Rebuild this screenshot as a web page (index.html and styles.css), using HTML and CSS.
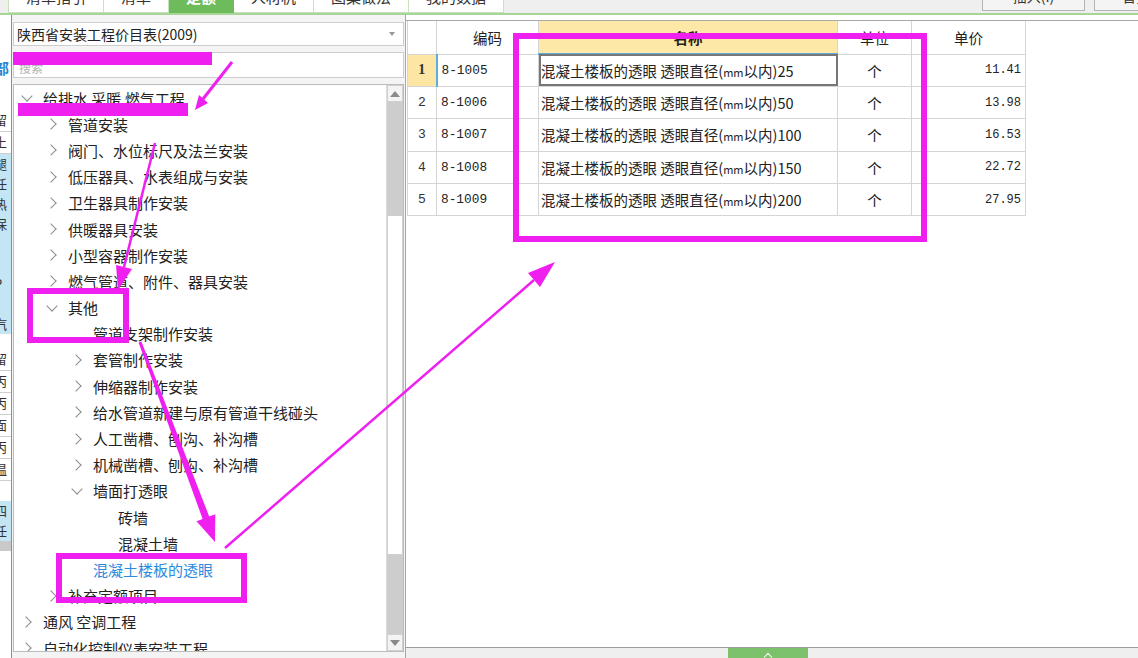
FILE: index.html
```html
<!DOCTYPE html>
<html lang="zh-CN">
<head>
    <meta charset="UTF-8">
    <title>定额</title>
    <link rel="stylesheet" href="styles.css">
</head>
<body>
    <div class="topbar">
        <div class="tabs">
            <div class="tab">清单指引</div>
            <div class="tab">清单</div>
            <div class="tab active">定额</div>
            <div class="tab">人材机</div>
            <div class="tab">图集做法</div>
            <div class="tab">我的数据</div>
        </div>
        <div class="actions">
            <button class="btn">插入(I)</button>
            <button class="btn">替换(R)</button>
        </div>
    </div>

    <div class="main">
        <div class="edge">
            <div class="edge-gap g40"></div>
            <div class="edge-cell link">部</div>
            <div class="edge-gap g29"></div>
            <div class="edge-cell line">留</div>
            <div class="edge-cell line">土</div>
            <div class="edge-block blue">
                <div class="edge-cell">腿</div>
                <div class="edge-cell">任</div>
                <div class="edge-cell">热</div>
                <div class="edge-cell">保</div>
                <div class="edge-cell"></div>
                <div class="edge-cell">(</div>
                <div class="edge-cell">P</div>
                <div class="edge-cell"></div>
                <div class="edge-cell">汽</div>
            </div>
            <div class="edge-gap g15"></div>
            <div class="edge-cell line">留</div>
            <div class="edge-cell line">丙</div>
            <div class="edge-cell line">丙</div>
            <div class="edge-cell line">面</div>
            <div class="edge-cell line">丙</div>
            <div class="edge-cell line">温</div>
            <div class="edge-gap g20"></div>
            <div class="edge-block blue">
                <div class="edge-cell">四</div>
                <div class="edge-cell">任</div>
            </div>
            <div class="edge-gap gray"></div>
        </div>

        <div class="left-panel">
            <div class="select">
                <span>陕西省安装工程价目表(2009)</span>
                <span class="caret"></span>
            </div>
            <div class="search">搜索</div>
            <div class="tree">
                <div class="tree-list">
                    <div class="node l0"><span class="tw open"></span>给排水 采暖 燃气工程</div>
                    <div class="node l1"><span class="tw"></span>管道安装</div>
                    <div class="node l1"><span class="tw"></span>阀门、水位标尺及法兰安装</div>
                    <div class="node l1"><span class="tw"></span>低压器具、水表组成与安装</div>
                    <div class="node l1"><span class="tw"></span>卫生器具制作安装</div>
                    <div class="node l1"><span class="tw"></span>供暖器具安装</div>
                    <div class="node l1"><span class="tw"></span>小型容器制作安装</div>
                    <div class="node l1"><span class="tw"></span>燃气管道、附件、器具安装</div>
                    <div class="node l1"><span class="tw open"></span>其他</div>
                    <div class="node l2"><span class="tw leaf"></span>管道支架制作安装</div>
                    <div class="node l2"><span class="tw"></span>套管制作安装</div>
                    <div class="node l2"><span class="tw"></span>伸缩器制作安装</div>
                    <div class="node l2"><span class="tw"></span>给水管道新建与原有管道干线碰头</div>
                    <div class="node l2"><span class="tw"></span>人工凿槽、刨沟、补沟槽</div>
                    <div class="node l2"><span class="tw"></span>机械凿槽、刨沟、补沟槽</div>
                    <div class="node l2"><span class="tw open"></span>墙面打透眼</div>
                    <div class="node l3"><span class="tw leaf"></span>砖墙</div>
                    <div class="node l3"><span class="tw leaf"></span>混凝土墙</div>
                    <div class="node l2 selected"><span class="tw leaf"></span>混凝土楼板的透眼</div>
                    <div class="node l1"><span class="tw"></span>补充定额项目</div>
                    <div class="node l0"><span class="tw"></span>通风 空调工程</div>
                    <div class="node l0"><span class="tw"></span>自动化控制仪表安装工程</div>
                </div>
                <div class="scroll">
                    <div class="scroll-btn"><span class="arrow up"></span></div>
                    <div class="scroll-track top"></div>
                    <div class="scroll-thumb"></div>
                    <div class="scroll-track bottom"></div>
                    <div class="scroll-btn"><span class="arrow down"></span></div>
                </div>
            </div>
        </div>

        <div class="right-panel">
            <div class="grid-wrap">
                <table class="grid">
                    <colgroup>
                        <col class="c-no"><col class="c-code"><col class="c-name"><col class="c-unit"><col class="c-price">
                    </colgroup>
                    <thead>
                        <tr><th></th><th>编码</th><th class="hl">名称</th><th>单位</th><th>单价</th></tr>
                    </thead>
                    <tbody>
                        <tr class="cur">
                            <td class="no">1</td><td class="code">8-1005</td>
                            <td class="name">混凝土楼板的透眼 透眼直径(<span class="mm">mm</span>以内)25</td>
                            <td class="unit">个</td><td class="price">11.41</td>
                        </tr>
                        <tr>
                            <td class="no">2</td><td class="code">8-1006</td>
                            <td class="name">混凝土楼板的透眼 透眼直径(<span class="mm">mm</span>以内)50</td>
                            <td class="unit">个</td><td class="price">13.98</td>
                        </tr>
                        <tr>
                            <td class="no">3</td><td class="code">8-1007</td>
                            <td class="name">混凝土楼板的透眼 透眼直径(<span class="mm">mm</span>以内)100</td>
                            <td class="unit">个</td><td class="price">16.53</td>
                        </tr>
                        <tr>
                            <td class="no">4</td><td class="code">8-1008</td>
                            <td class="name">混凝土楼板的透眼 透眼直径(<span class="mm">mm</span>以内)150</td>
                            <td class="unit">个</td><td class="price">22.72</td>
                        </tr>
                        <tr>
                            <td class="no">5</td><td class="code">8-1009</td>
                            <td class="name">混凝土楼板的透眼 透眼直径(<span class="mm">mm</span>以内)200</td>
                            <td class="unit">个</td><td class="price">27.95</td>
                        </tr>
                    </tbody>
                </table>
            </div>
            <div class="bottom-bar">
                <div class="pull"><span class="pull-arrow"></span></div>
            </div>
        </div>
    </div>

    <!-- annotation marks drawn over the screenshot -->
    <svg class="marks" width="1138" height="658" viewBox="0 0 1138 658">
        <g fill="#ef1fef" stroke="#ef1fef">
            <rect x="13" y="52" width="199" height="13" stroke="none"/>
            <rect x="18" y="103" width="170" height="13" stroke="none"/>

            <line x1="232" y1="62" x2="203" y2="99" stroke-width="3"/>
            <polygon points="195,110 208,103 199,95" stroke="none"/>

            <line x1="155" y1="143" x2="124" y2="267" stroke-width="2.5"/>
            <polygon points="118,290 132,269 116,265" stroke="none"/>

            <polygon points="138.6,342.5 141.4,341.5 209.2,516.5 215.3,514.2 215,542 196.5,521.2 202.6,518.9" stroke="none"/>

            <line x1="225" y1="548" x2="534" y2="280" stroke-width="2.5"/>
            <polygon points="555,262 540,287 528,273" stroke="none"/>

            <rect x="30" y="291" width="96" height="49" fill="none" stroke-width="6"/>
            <rect x="59" y="556" width="185" height="44" fill="none" stroke-width="6"/>
            <rect x="516" y="36" width="408" height="203" fill="none" stroke-width="6"/>
        </g>
    </svg>
</body>
</html>
```

FILE: styles.css
```css
* {
    margin: 0;
    padding: 0;
    box-sizing: border-box;
}

body {
    width: 1138px;
    height: 658px;
    overflow: hidden;
    position: relative;
    font-family: "Noto Sans CJK SC", "Noto Sans", sans-serif;
    background: #f0f0f0;
    color: #222;
}

/* top tab strip (cut off by the screenshot) */
.topbar {
    height: 15px;
    display: flex;
    justify-content: space-between;
    border-bottom: 2px solid #a6d597;
    background: #efefef;
    overflow: hidden;
}

.tabs {
    display: flex;
    margin-left: 8px;
    margin-top: -19px;
    height: 32px;
}

.tab {
    height: 32px;
    line-height: 30px;
    padding: 0 17px;
    min-width: 65px;
    text-align: center;
    font-size: 15px;
    color: #333;
    background: #fff;
    border: 1px solid #c7e2bd;
    border-left: none;
}

.tab:first-child {
    border-left: 1px solid #c7e2bd;
    min-width: 89px;
}

.tab.active {
    background: #6dbb5b;
    color: #fff;
    font-weight: bold;
    border-color: #6dbb5b;
}

.actions {
    display: flex;
    gap: 9px;
    margin-top: -19px;
    margin-right: -59px;
}

.btn {
    width: 103px;
    height: 30px;
    font-family: inherit;
    font-size: 14px;
    color: #333;
    background: #f4f4f4;
    border: 1px solid #b4b4b4;
}

.main {
    display: flex;
    height: 643px;
}

/* sliver of the window behind */
.edge {
    width: 12px;
    flex: none;
    background: #fff;
    border-right: 1px solid #8d8d8d;
    overflow: hidden;
    font-size: 13px;
}

.edge-gap.g40 { height: 40px; }
.edge-gap.g29 { height: 29px; }
.edge-gap.g15 { height: 15px; }
.edge-gap.g20 { height: 20px; }
.edge-gap.gray { height: 10px; background: #c9c9c9; }

.edge-cell {
    height: 20px;
    line-height: 20px;
    margin-left: -6px;
    white-space: nowrap;
    color: #333;
}

.edge-cell.line {
    height: 22px;
    border-bottom: 1px solid #cfcfcf;
}

.edge-cell.link {
    height: 26px;
    line-height: 26px;
    color: #2a86d1;
    font-weight: bold;
    font-size: 15px;
}

.edge-block.blue {
    background: #c4e5f4;
}

/* left: library tree */
.left-panel {
    width: 393px;
    flex: none;
    padding: 7px 1px 0 1px;
    background: #f4f4f4;
}

.select {
    height: 24px;
    display: flex;
    align-items: center;
    justify-content: space-between;
    padding: 0 8px 0 3px;
    background: #fff;
    border: 1px solid #cdcdcd;
    font-size: 14px;
    color: #222;
}

.caret {
    width: 0;
    height: 0;
    border-left: 3px solid transparent;
    border-right: 3px solid transparent;
    border-top: 4px solid #999;
}

.search {
    height: 26px;
    margin-top: 6px;
    padding: 6px 0 0 5px;
    background: #fff;
    border: 1px solid #cdcdcd;
    font-size: 12px;
    color: #b3b3b3;
}

.tree {
    height: 568px;
    margin-top: 6px;
    display: flex;
    background: #fff;
    border: 1px solid #bcbcbc;
}

.tree-list {
    flex: 1;
    overflow: hidden;
}

.node {
    height: 26.2px;
    display: flex;
    align-items: center;
    font-size: 15px;
    color: #222;
    white-space: nowrap;
}

.node.l0 { padding-left: 7px; }
.node.l1 { padding-left: 32px; }
.node.l2 { padding-left: 57px; }
.node.l3 { padding-left: 82px; }

.node.selected {
    color: #2b8ae0;
}

.tw {
    width: 12px;
    height: 12px;
    margin-right: 10px;
    flex: none;
    display: flex;
    align-items: center;
    justify-content: center;
}

.tw::before {
    content: '';
    width: 7px;
    height: 7px;
    border-right: 1.7px solid #8c8c8c;
    border-bottom: 1.7px solid #8c8c8c;
    transform: translateX(-1px) rotate(-45deg);
}

.tw.open::before {
    transform: translateY(-2px) rotate(45deg);
}

.tw.leaf::before {
    display: none;
}

.scroll {
    width: 17px;
    flex: none;
    display: flex;
    flex-direction: column;
    border-left: 1px solid #dcdcdc;
}

.scroll-btn {
    height: 17px;
    display: flex;
    align-items: center;
    justify-content: center;
    background: #f4f4f4;
    border: 1px solid #d0d0d0;
}

.arrow {
    width: 0;
    height: 0;
    border-left: 5px solid transparent;
    border-right: 5px solid transparent;
}

.arrow.up { border-bottom: 6px solid #8a8a8a; }
.arrow.down { border-top: 6px solid #8a8a8a; }

.scroll-track.top { height: 113px; background: #cdcdcd; }
.scroll-track.bottom { flex: 1; background: #cdcdcd; }

.scroll-thumb {
    height: 340px;
    background: #fff;
    border: 1px solid #cfcfcf;
}

/* right: quota grid */
.right-panel {
    flex: 1;
    display: flex;
    flex-direction: column;
    padding-top: 5px;
    background: #fff;
    border-left: 1px solid #a6a6a6;
}

.grid-wrap {
    flex: 1;
    padding-left: 1px;
    border-top: 1px solid #a8a8a8;
}

.grid {
    width: 619px;
    table-layout: fixed;
    border-collapse: collapse;
    font-size: 14.5px;
    color: #222;
}

.c-no { width: 29px; }
.c-code { width: 102px; }
.c-name { width: 299px; }
.c-unit { width: 74px; }
.c-price { width: 114px; }

.grid th,
.grid td {
    border: 1px solid #d5d5d5;
    white-space: nowrap;
    overflow: hidden;
}

.grid thead tr {
    height: 33px;
}

.grid th {
    font-weight: normal;
    border-top: none;
}

.grid th.hl {
    background: #fde8a7;
    font-weight: bold;
    border-bottom: 2px solid #5eaedd;
}

.grid tbody tr {
    height: 32.4px;
}

.grid td.no {
    text-align: center;
    font-family: "Liberation Mono", monospace;
    font-size: 13px;
    color: #333;
}

.grid td.code {
    padding-left: 4px;
    font-family: "Liberation Mono", monospace;
    font-size: 12.8px;
}

.grid td.name {
    padding-left: 2px;
}

.mm {
    font-size: 11px;
}

.grid td.unit {
    text-align: center;
}

.grid td.price {
    text-align: right;
    padding-right: 4px;
    font-family: "Liberation Mono", monospace;
    font-size: 12px;
}

.grid tr.cur td.no {
    background: #fde6a4;
    font-family: "Liberation Serif", serif;
    font-weight: bold;
    font-size: 14px;
}

.grid tr.cur td.code {
    border-left: 2px solid #5eaedd;
}

.grid tr.cur td.name {
    outline: 2px solid #777;
    outline-offset: -2px;
}

.bottom-bar {
    height: 11px;
    flex: none;
    background: #efefef;
    border-top: 1px solid #9c9c9c;
}

.pull {
    width: 80px;
    height: 10px;
    margin-left: 322px;
    background: #7cc16b;
    display: flex;
    justify-content: center;
    align-items: flex-end;
}

.pull-arrow {
    width: 6px;
    height: 6px;
    border-left: 1.5px solid #fff;
    border-top: 1.5px solid #fff;
    transform: translateY(2px) rotate(45deg);
}

/* annotation layer */
.marks {
    position: absolute;
    left: 0;
    top: 0;
    pointer-events: none;
}
```
